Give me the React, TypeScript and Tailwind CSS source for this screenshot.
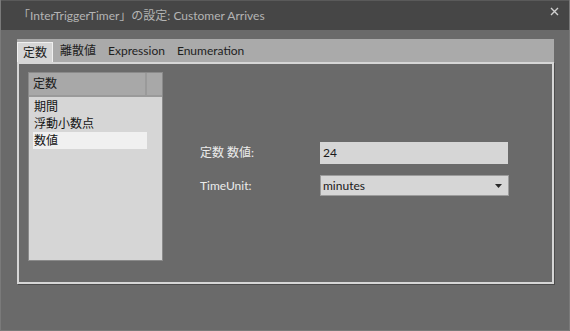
import React from 'react';

const ui = 'Lato, "Noto Sans CJK JP", sans-serif';

function Tab({ label, active }: { label: string; active?: boolean }) {
  return (
    <div
      className={
        active
          ? 'mt-[3px] h-[20px] px-[5px] flex items-center bg-[#d6d6d6] border-l border-t border-r border-[#f0f0f0] text-[#1a1a1a]'
          : 'h-[23px] px-[6px] flex items-center text-[#1e1e1e]'
      }
    >
      {label}
    </div>
  );
}

export default function App() {
  const items = ['期間', '浮動小数点', '数値'];

  return (
    <div
      className="w-[570px] h-[331px] flex flex-col bg-[#6a6a6a] border border-t-0 border-[#7a7a7a] text-[12px] overflow-hidden"
      style={{ fontFamily: ui }}
    >
      {/* Title bar */}
      <div className="h-[30px] shrink-0 bg-[#464646] border-t border-[#5a5a5a] flex items-center justify-between pl-[17px] pr-[10px]">
        <span className="text-[12px] text-[#b4b4b4]">「InterTriggerTimer」の設定: Customer Arrives</span>
        <svg width="9" height="9" viewBox="0 0 9 9" className="mb-[8px]">
          <path d="M1 1 L8 8 M8 1 L1 8" stroke="#d0d0d0" strokeWidth="1.4" />
        </svg>
      </div>

      {/* Body */}
      <div className="pl-[16px] pt-[9px] w-[553px]">
        {/* Tab strip */}
        <div className="h-[23px] bg-[#aaaaaa] flex items-start">
          <Tab label="定数" active />
          <div className="ml-[1px]" />
          <Tab label="離散値" />
          <Tab label="Expression" />
          <Tab label="Enumeration" />
        </div>

        {/* Tab panel */}
        <div className="h-[222px] border-2 border-[#d6d6d6] shadow-[1px_1px_0_#4c4c4c] flex pl-[9px] pt-[8px]">
          {/* List box */}
          <div className="w-[135px] h-[189px] bg-[#d6d6d6] border border-[#8a8a8a] flex flex-col">
            <div className="h-[24px] bg-[#a8a8a8] flex border-b-2 border-[#9a9a9a]">
              <div className="w-[118px] flex items-center pl-[4px] text-[#1a1a1a] border-r-2 border-[#9a9a9a]">定数</div>
              <div className="flex-1" />
            </div>
            <div className="flex flex-col pt-[1px] pl-[4px]">
              {items.map((t) => (
                <div
                  key={t}
                  className={
                    'h-[17px] w-[114px] flex items-center pl-[1px] text-[#141414] ' +
                    (t === '数値' ? 'bg-[#f0f0f0]' : '')
                  }
                >
                  {t}
                </div>
              ))}
            </div>
          </div>

          {/* Form */}
          <div className="ml-[37px] pt-[70px] flex flex-col gap-[11px]">
            <div className="flex items-center">
              <span className="w-[120px] text-[#ececec]">定数 数値:</span>
              <div className="w-[188px] h-[22px] bg-[#d6d6d6] flex items-center pl-[3px] text-[#1a1a1a]">24</div>
            </div>
            <div className="flex items-center">
              <span className="w-[120px] text-[#ececec]">TimeUnit:</span>
              <div className="w-[189px] h-[21px] bg-[#d6d6d6] border border-[#9c9c9c] flex items-center justify-between pl-[2px] pr-[6px] text-[#1a1a1a]">
                <span>minutes</span>
                <svg width="7" height="4" viewBox="0 0 7 4">
                  <path d="M0 0 H7 L3.5 4 Z" fill="#2a2a2a" />
                </svg>
              </div>
            </div>
          </div>
        </div>
      </div>
    </div>
  );
}
